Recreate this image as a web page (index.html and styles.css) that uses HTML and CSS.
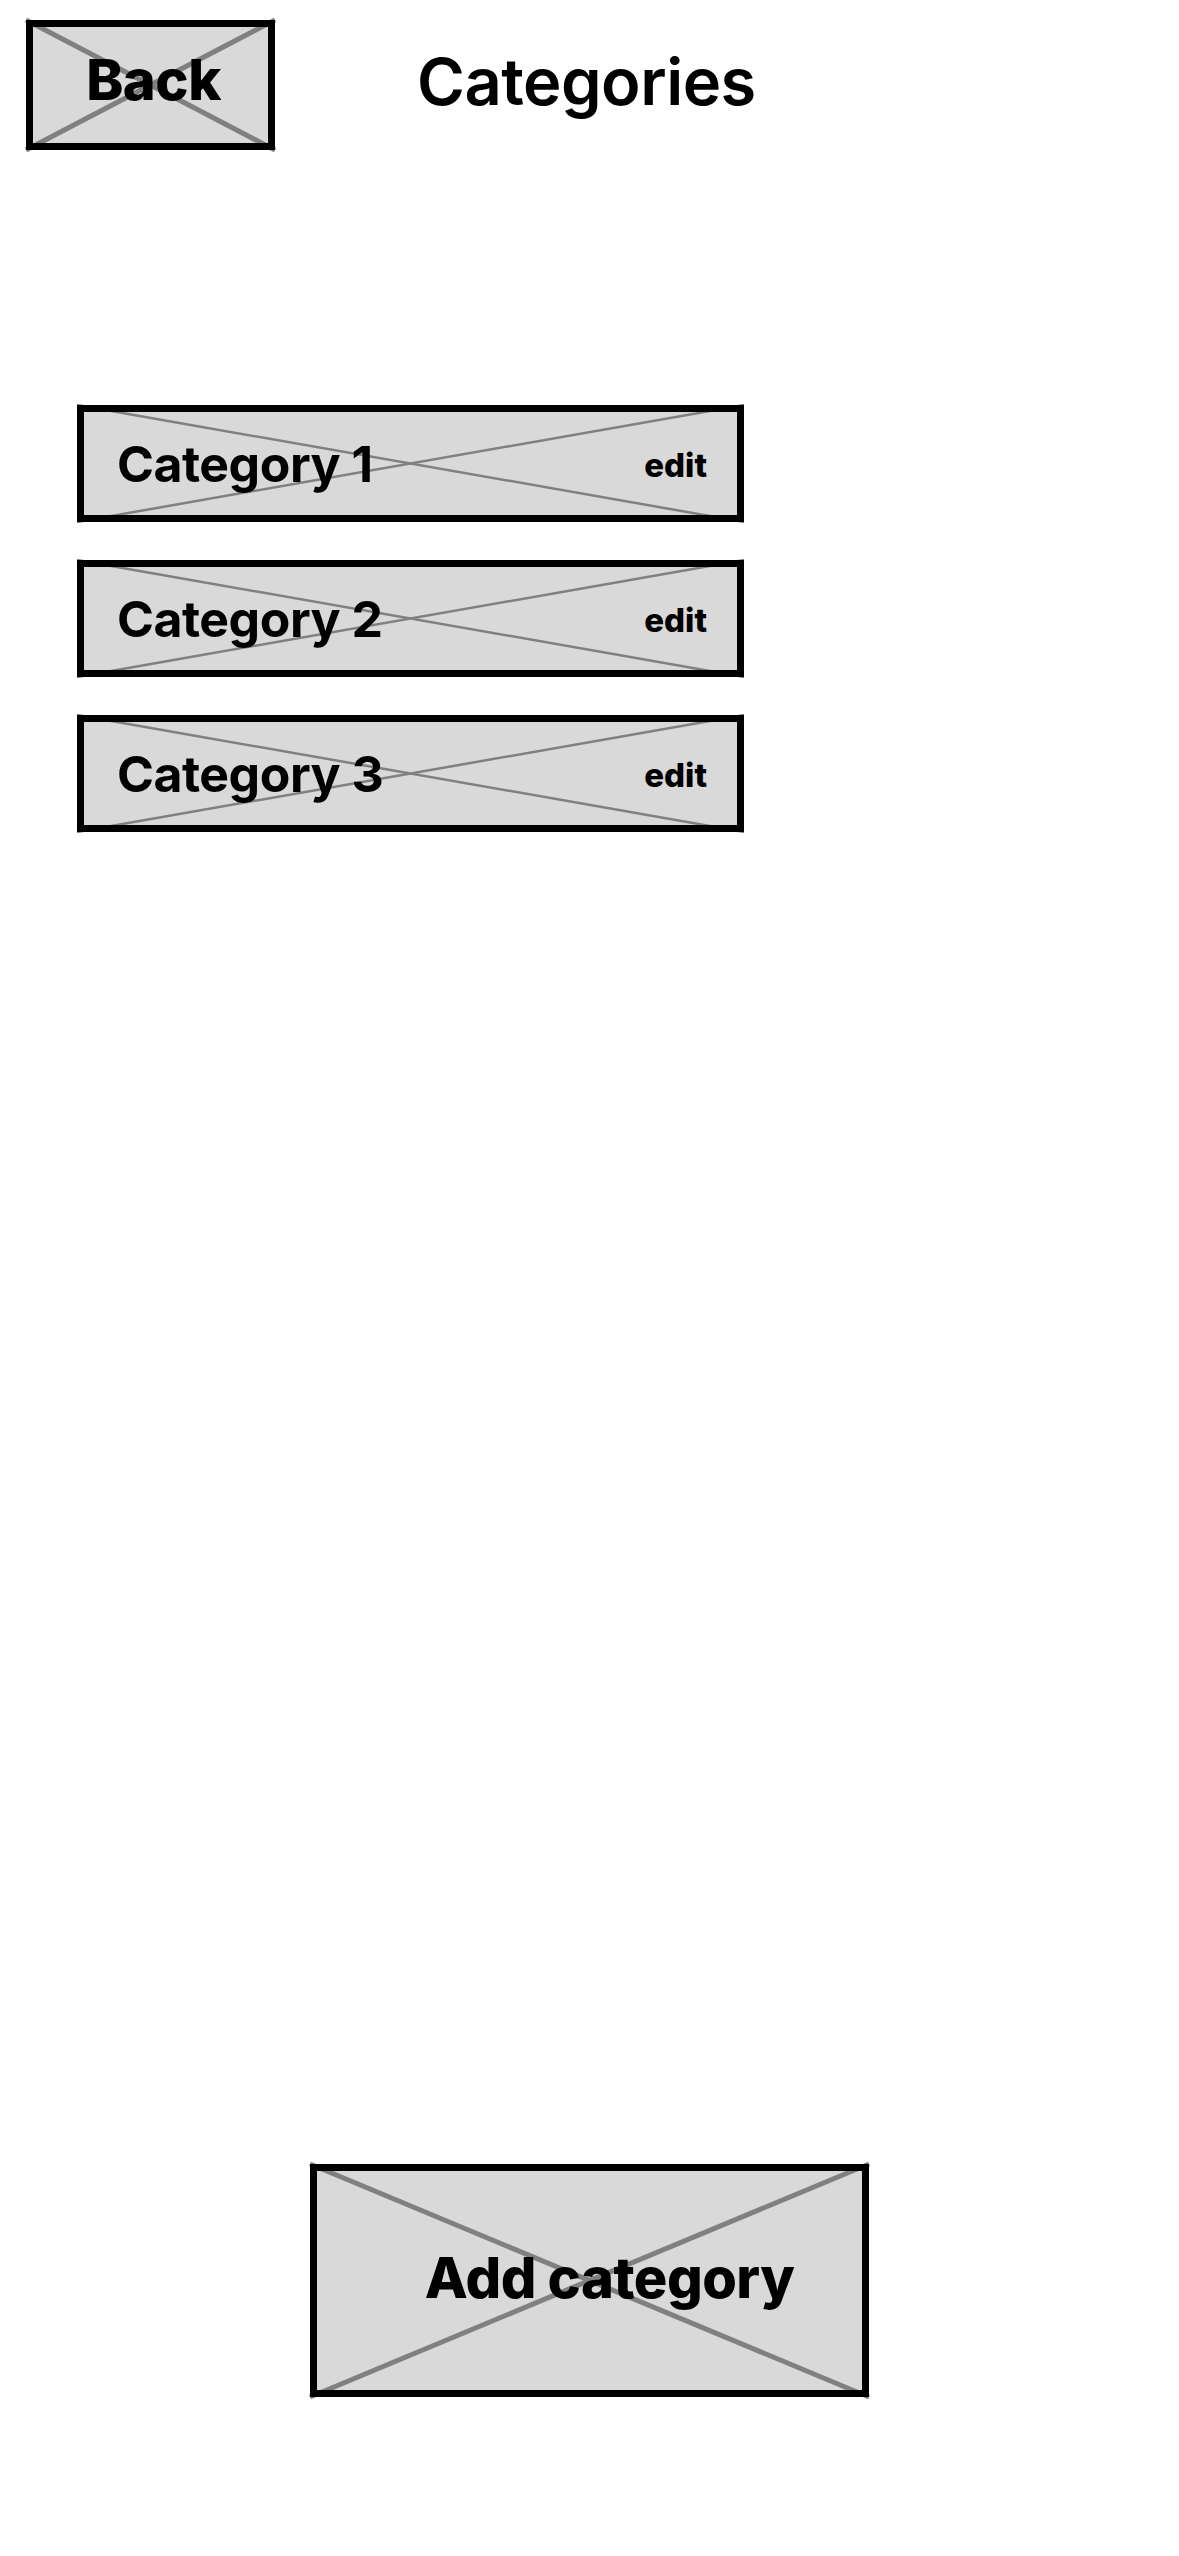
FILE: index.html
```html
<!DOCTYPE html>
<html lang="en">
<head>
    <meta charset="UTF-8">
    <meta name="viewport" content="width=device-width, initial-scale=1.0">
    <title>Categories</title>
    <link rel="stylesheet" href="styles.css">
</head>
<body>
    <div class="screen">
        <div class="top-bar">
            <button class="box back-btn">
                <svg class="cross" viewBox="0 0 100 100" preserveAspectRatio="none">
                    <line x1="0" y1="0" x2="100" y2="100" />
                    <line x1="0" y1="100" x2="100" y2="0" />
                </svg>
                <span class="label">Back</span>
            </button>
            <h1 class="title">Categories</h1>
        </div>

        <div class="category-list">
            <div class="box category">
                <svg class="cross" viewBox="0 0 100 100" preserveAspectRatio="none">
                    <line x1="0" y1="0" x2="100" y2="100" />
                    <line x1="0" y1="100" x2="100" y2="0" />
                </svg>
                <span class="label name">Category 1</span>
                <span class="label edit">edit</span>
            </div>
            <div class="box category">
                <svg class="cross" viewBox="0 0 100 100" preserveAspectRatio="none">
                    <line x1="0" y1="0" x2="100" y2="100" />
                    <line x1="0" y1="100" x2="100" y2="0" />
                </svg>
                <span class="label name">Category 2</span>
                <span class="label edit">edit</span>
            </div>
            <div class="box category">
                <svg class="cross" viewBox="0 0 100 100" preserveAspectRatio="none">
                    <line x1="0" y1="0" x2="100" y2="100" />
                    <line x1="0" y1="100" x2="100" y2="0" />
                </svg>
                <span class="label name">Category 3</span>
                <span class="label edit">edit</span>
            </div>
        </div>

        <div class="bottom">
            <button class="box add-btn">
                <svg class="cross" viewBox="0 0 100 100" preserveAspectRatio="none">
                    <line x1="0" y1="0" x2="100" y2="100" />
                    <line x1="0" y1="100" x2="100" y2="0" />
                </svg>
                <span class="label">Add category</span>
            </button>
        </div>
    </div>
</body>
</html>
```

FILE: styles.css
```css
* {
    margin: 0;
    padding: 0;
    box-sizing: border-box;
}

body {
    font-family: Inter, 'Noto Sans', sans-serif;
    background: white;
    color: black;
}

.screen {
    min-height: 2556px;
    display: flex;
    flex-direction: column;
}

/* placeholder box: grey fill, X lines, thick border on top */
.box {
    position: relative;
    background: #d9d9d9;
    border: none;
    font-family: inherit;
    color: black;
    display: flex;
    align-items: center;
}

.box::after {
    content: '';
    position: absolute;
    inset: 0;
    border: 7px solid #000;
    pointer-events: none;
}

.cross {
    position: absolute;
    inset: 0;
    width: 100%;
    height: 100%;
    overflow: visible;
}

.cross line {
    stroke: #808080;
    stroke-width: 5;
    vector-effect: non-scaling-stroke;
}

.label {
    position: relative;
    z-index: 1;
}

.top-bar {
    display: flex;
    align-items: center;
    padding: 20px 0 0 26px;
}

.back-btn {
    width: 249px;
    height: 130px;
    justify-content: center;
    padding: 0 0 10px 6px;
    font-size: 56px;
    font-weight: 800;
    letter-spacing: -0.5px;
}

.title {
    margin-left: 142px;
    padding-bottom: 8px;
    font-size: 65px;
    font-weight: 600;
    letter-spacing: -0.5px;
}

.category-list {
    display: flex;
    flex-direction: column;
    gap: 38px;
    margin: 255px 0 0 77px;
}

.category {
    width: 667px;
    height: 117px;
    justify-content: space-between;
    padding: 0 37px 0 40px;
}

.category .cross line {
    stroke-width: 2.5;
}

.category .name {
    font-size: 50px;
    font-weight: 700;
    letter-spacing: -0.5px;
}

.category .edit {
    font-size: 33px;
    font-weight: 800;
    padding-top: 2px;
}

.bottom {
    margin-top: auto;
    padding-bottom: 159px;
    display: flex;
    justify-content: center;
}

.add-btn {
    width: 559px;
    height: 233px;
    justify-content: center;
    padding: 0 0 6px 40px;
    font-size: 56px;
    font-weight: 800;
    letter-spacing: -0.5px;
}
```
